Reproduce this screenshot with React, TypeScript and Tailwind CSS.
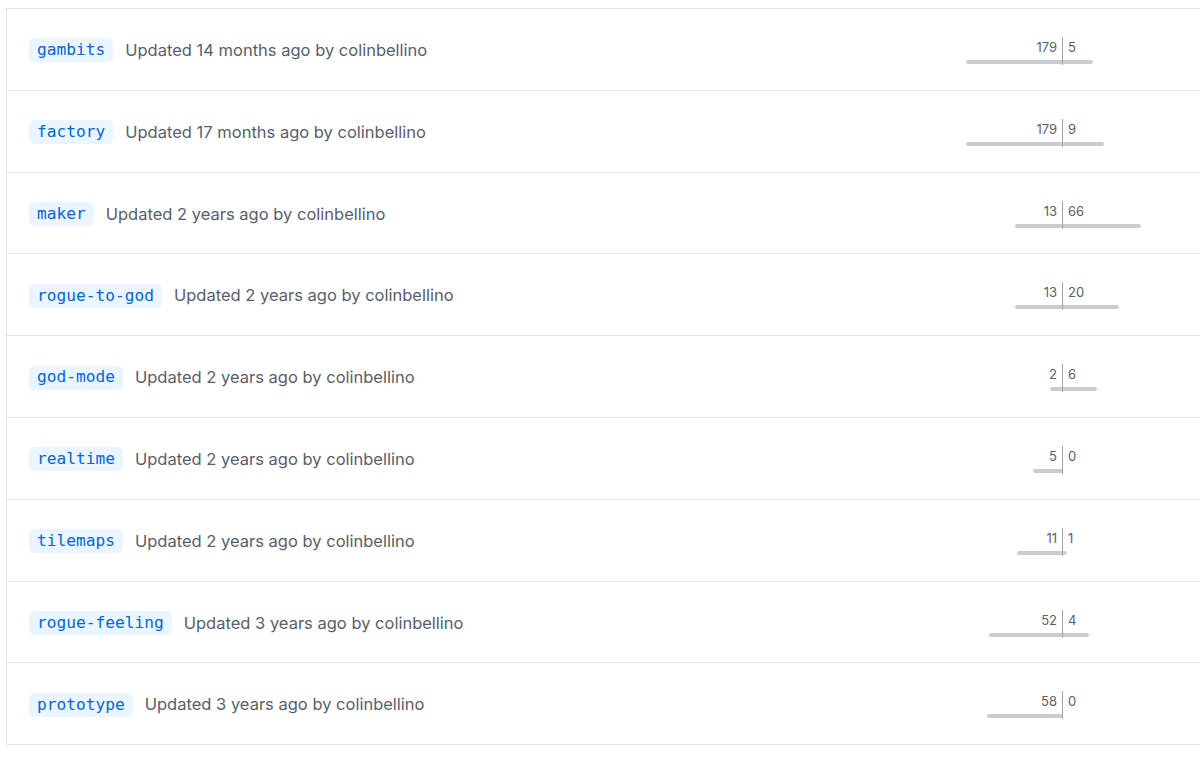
import React from "react";

type Row = {
  name: string;
  when: string;
  behind: number;
  ahead: number;
  lw: number;
  rw: number;
};

const rows: Row[] = [
  { name: "gambits", when: "14 months ago", behind: 179, ahead: 5, lw: 96, rw: 30 },
  { name: "factory", when: "17 months ago", behind: 179, ahead: 9, lw: 96, rw: 41 },
  { name: "maker", when: "2 years ago", behind: 13, ahead: 66, lw: 47, rw: 78 },
  { name: "rogue-to-god", when: "2 years ago", behind: 13, ahead: 20, lw: 47, rw: 56 },
  { name: "god-mode", when: "2 years ago", behind: 2, ahead: 6, lw: 12, rw: 34 },
  { name: "realtime", when: "2 years ago", behind: 5, ahead: 0, lw: 29, rw: 0 },
  { name: "tilemaps", when: "2 years ago", behind: 11, ahead: 1, lw: 45, rw: 4 },
  { name: "rogue-feeling", when: "3 years ago", behind: 52, ahead: 4, lw: 73, rw: 26 },
  { name: "prototype", when: "3 years ago", behind: 58, ahead: 0, lw: 75, rw: 0 },
];

const sans = { fontFamily: "Inter, 'Liberation Sans', sans-serif" };
const mono = { fontFamily: "'DejaVu Sans Mono', 'Liberation Mono', monospace" };

function BranchRow({ r }: { r: Row }) {
  return (
    <div className="flex h-[81.8px] items-start border-b border-[#e1e4e8]">
      <div className="flex flex-1 items-center pl-[22px] pt-[29px]">
        <span
          className="flex h-[24px] items-center rounded-md bg-[#eaf5ff] px-2 text-[16.2px] text-[#0366d6]"
          style={mono}
        >
          {r.name}
        </span>
        <span className="ml-3 text-[16.5px] text-[#586069]" style={sans}>
          Updated {r.when} by colinbellino
        </span>
      </div>
      <div className="flex w-[201px] pt-[28px]" style={sans}>
        <div className="flex h-[28px] w-[100px] flex-col items-end">
          <div className="mt-[2px] h-[16px] pr-[5px] text-[13px] leading-4 text-[#586069]">
            {r.behind}
          </div>
          <div
            className="mt-[5px] h-[4px] rounded-l-full bg-[#c9cdd2]"
            style={{ width: r.lw }}
          />
        </div>
        <div className="h-[28px] w-px bg-[#9ea5ad]" />
        <div className="flex h-[28px] w-[100px] flex-col items-start">
          <div className="mt-[2px] h-[16px] pl-[5px] text-[13px] leading-4 text-[#586069]">
            {r.ahead}
          </div>
          <div
            className="mt-[5px] h-[4px] rounded-r-full bg-[#c9cdd2]"
            style={{ width: r.rw }}
          />
        </div>
      </div>
      <div className="w-[37px]" />
    </div>
  );
}

export default function App() {
  return (
    <div className="h-[758px] w-[1200px] overflow-hidden bg-white">
      <div className="ml-[6px] mt-[8px] border-l border-t border-[#e1e4e8]">
        {rows.map((r) => (
          <BranchRow key={r.name} r={r} />
        ))}
      </div>
    </div>
  );
}
